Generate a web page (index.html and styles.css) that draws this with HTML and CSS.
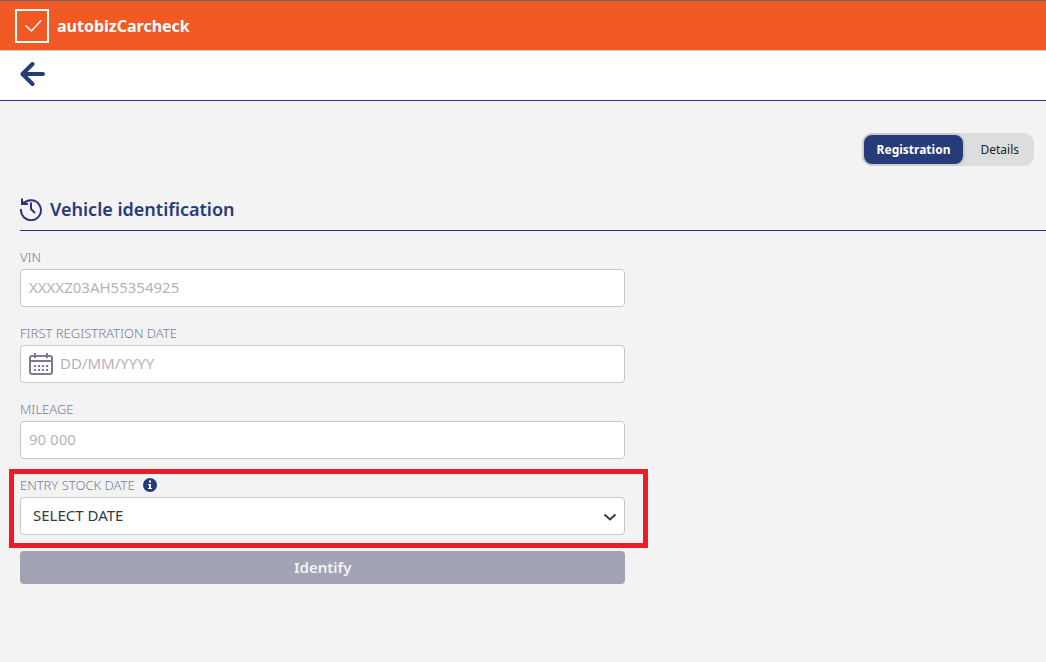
FILE: index.html
```html
<!DOCTYPE html>
<html lang="en">
<head>
    <meta charset="UTF-8">
    <meta name="viewport" content="width=device-width, initial-scale=1.0">
    <title>autobizCarcheck</title>
    <link rel="stylesheet" href="styles.css">
</head>
<body>
<header class="header">
    <svg class="logo" viewBox="0 0 34 34" width="34" height="34" aria-hidden="true">
        <rect x="1" y="1" width="32" height="32" fill="none" stroke="#fff" stroke-width="2"/>
        <path d="M10.500 16.500l6 5.500L26 11.500" fill="none" stroke="#fff" stroke-width="1.500"/>
    </svg>
    <span class="brand">autobizCarcheck</span>
</header>

<nav class="toolbar">
    <a href="#" class="back" aria-label="Back">
        <svg viewBox="0 0 26 26" width="26" height="26" aria-hidden="true">
            <path d="M12.500 3L2.500 13l10 10M3 13h20" fill="none" stroke="currentColor" stroke-width="4" stroke-linecap="round" stroke-linejoin="round"/>
        </svg>
    </a>
</nav>

<main class="content">
    <div class="tabs">
        <button type="button" class="tab active">Registration</button>
        <button type="button" class="tab">Details</button>
    </div>

    <h1 class="title">
        <svg class="history-icon" viewBox="0 0 24 24" width="24" height="24" aria-hidden="true">
            <g fill="none" stroke="currentColor" stroke-width="2">
                <path d="M3.500 6.500A10 10 0 1 1 1 12"/>
                <path d="M2 1.500v5.500h6"/>
                <path d="M11 5.500V12l4 4"/>
            </g>
            <path d="M1 2l6 6H1z" fill="currentColor"/>
        </svg>
        Vehicle identification
    </h1>

    <form class="form">
        <div class="form-group">
            <label class="form-label" for="vin">VIN</label>
            <input type="text" id="vin" class="input" placeholder="XXXXZ03AH55354925">
        </div>

        <div class="form-group">
            <label class="form-label" for="registration">FIRST REGISTRATION DATE</label>
            <div class="input date-input">
                <svg viewBox="0 0 24 24" width="24" height="24" aria-hidden="true">
                    <rect x="1" y="4" width="22" height="18" rx="2" fill="none" stroke="currentColor" stroke-width="2"/>
                    <path d="M1 9h22M6 1v5M18 1v5" fill="none" stroke="currentColor" stroke-width="2"/>
                    <path d="M5 14h14M5 18h14" fill="none" stroke="currentColor" stroke-width="2" stroke-dasharray="2 2"/>
                </svg>
                <input type="text" id="registration" placeholder="DD/MM/YYYY">
            </div>
        </div>

        <div class="form-group">
            <label class="form-label" for="mileage">MILEAGE</label>
            <input type="text" id="mileage" class="input" placeholder="90 000">
        </div>

        <div class="form-group highlighted">
            <label class="form-label" for="stock">ENTRY STOCK DATE
                <svg viewBox="0 0 14 14" width="14" height="14" aria-hidden="true">
                    <circle cx="7" cy="7" r="7" fill="#273a7a"/>
                    <path d="M6 2.500h2v2H6zM5 6h3v4h1v1H5v-1h1V7H5z" fill="#fff"/>
                </svg>
            </label>
            <div class="select-wrap">
                <select id="stock" class="input select">
                    <option>SELECT DATE</option>
                </select>
                <svg class="chevron" viewBox="0 0 14 8" width="14" height="8" aria-hidden="true">
                    <path d="M1.500 1.500L7 6.500l5.500-5" fill="none" stroke="#343a40" stroke-width="2"/>
                </svg>
            </div>
        </div>

        <button type="submit" class="button">Identify</button>
    </form>
</main>
</body>
</html>
```
FILE: styles.css
```css
:root {
    --primary-color: #273a7a;
    --accent-color: #f15a24;
    --background-color: #f3f3f3;
    --muted-color: #7b7b98;
    --border-color: #c8c8c8;
}

* {
    box-sizing: border-box;
}

body {
    margin: 0;
    font-family: "Noto Sans", "Open Sans", sans-serif;
    background-color: var(--background-color);
    color: #212529;
}

svg {
    flex: none;
}

.header {
    display: flex;
    align-items: center;
    gap: 8px;
    height: 51px;
    padding: 0 15px;
    background-color: var(--accent-color);
    border-top: 1px solid #666;
    border-bottom: 1px solid #ccc;
}

.brand {
    color: white;
    font-size: 16px;
    font-weight: 700;
}

.toolbar {
    display: flex;
    padding: 10px 20px 13px;
    background: white;
    border-bottom: 1px solid var(--primary-color);
}

.back {
    display: flex;
    color: var(--primary-color);
}

.content {
    padding: 32px 0 32px 20px;
}

.tabs {
    display: flex;
    width: fit-content;
    margin-left: auto;
    margin-right: 12px;
    background: #ddd;
    border-radius: 10px;
}

.tab {
    height: 33px;
    padding: 0 13px;
    border: 2px solid transparent;
    border-radius: 10px;
    background: transparent;
    color: #212529;
    font-family: inherit;
    font-size: 12px;
    cursor: pointer;
}

.tab.active {
    background: var(--primary-color);
    border-color: #ccc;
    color: white;
    font-weight: 700;
}

.title {
    display: flex;
    align-items: center;
    gap: 6px;
    margin: 22px 0 16px;
    padding: 6px 0;
    border-bottom: 1px solid var(--primary-color);
    color: var(--primary-color);
    font-size: 18px;
    font-weight: 600;
    line-height: 30px;
}

.history-icon {
    color: #2e3180;
}

.form {
    width: 59%;
}

.form-group {
    margin-bottom: 16px;
}

.form-label {
    display: flex;
    align-items: center;
    gap: 8px;
    height: 22px;
    padding-bottom: 2px;
    color: var(--muted-color);
    font-size: 13px;
    font-weight: 300;
}

.input {
    display: block;
    width: 100%;
    height: 38px;
    padding: 0 8px 2px;
    border: 1px solid var(--border-color);
    border-radius: 4px;
    background: white;
    color: #343a40;
    font-family: inherit;
    font-size: 15px;
}

.input::placeholder,
.date-input input::placeholder {
    color: #b4b4b8;
}

.date-input {
    display: flex;
    align-items: center;
    gap: 7px;
    padding-bottom: 0;
    color: var(--muted-color);
}

.date-input input {
    flex: 1;
    min-width: 0;
    padding: 0 0 2px;
    border: none;
    outline: none;
    background: transparent;
    font: inherit;
}

.select-wrap {
    position: relative;
}

.select {
    appearance: none;
    padding: 0 32px 2px 12px;
}

.chevron {
    position: absolute;
    top: 16px;
    right: 8px;
    pointer-events: none;
}

/* Red frame drawn around the field */
.highlighted {
    position: relative;
}

.highlighted::after {
    content: "";
    position: absolute;
    inset: -6px -23px -13px -11px;
    border: 5px solid #ed1c24;
    pointer-events: none;
}

.button {
    display: block;
    width: 100%;
    height: 33px;
    padding: 0 0 2px;
    border: none;
    border-radius: 4px;
    background-color: #a3a3b6;
    color: #f3f3f3;
    font-family: inherit;
    font-size: 15px;
    font-weight: 600;
    cursor: pointer;
}
```
